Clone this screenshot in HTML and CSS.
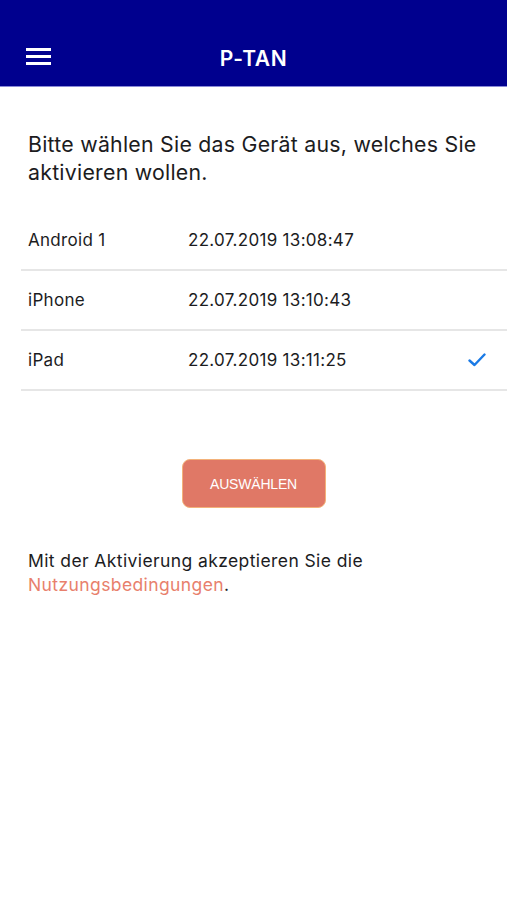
FILE: index.html
```html
<!DOCTYPE html>
<html lang="de">
<head>
<meta charset="utf-8">
<link rel="stylesheet" href="styles.css">
</head>
<body>
<header class="topbar">
  <button class="menu" aria-label="Menü">
    <svg width="25" height="17" viewBox="0 0 25 17"><rect x="0" y="0" width="25" height="3" fill="#fff"/><rect x="0" y="7" width="25" height="3" fill="#fff"/><rect x="0" y="14" width="25" height="3" fill="#fff"/></svg>
  </button>
  <h1 class="title">P-TAN</h1>
</header>
<main class="content">
  <p class="intro">Bitte wählen Sie das Gerät aus, welches Sie aktivieren wollen.</p>
  <ul class="devices">
    <li class="device"><span class="name">Android 1</span><span class="date">22.07.2019 13:08:47</span></li>
    <li class="device"><span class="name">iPhone</span><span class="date">22.07.2019 13:10:43</span></li>
    <li class="device"><span class="name">iPad</span><span class="date">22.07.2019 13:11:25</span>
      <svg class="check" width="18" height="14" viewBox="0 0 18 14"><path d="M1.5 7.5 L6.5 12 L16.5 1.5" fill="none" stroke="#1a7ae6" stroke-width="2.4" stroke-linecap="round" stroke-linejoin="round"/></svg>
    </li>
  </ul>
  <div class="actions"><button class="select">AUSWÄHLEN</button></div>
  <p class="terms">Mit der Aktivierung akzeptieren Sie die <a class="link" href="#">Nutzungsbedingungen</a>.</p>
</main>
</body>
</html>
```
FILE: styles.css
```css
* { box-sizing: border-box; }
html, body { margin: 0; padding: 0; background: #fff; }
body { font-family: Inter, "Noto Sans", sans-serif; color: #1c1c1e; }
.topbar {
  height: 87px;
  background: #00008e;
  display: flex;
  align-items: flex-end;
  justify-content: center;
  padding-bottom: 15px;
  border-bottom: 1px solid #8a8ad8;
  position: relative;
}
.menu {
  position: absolute;
  left: 26px;
  top: 48px;
  background: none;
  border: 0;
  padding: 0;
  line-height: 0;
}
.title {
  margin: 0;
  color: #fff;
  font-size: 21px;
  font-weight: 600;
  letter-spacing: 0.6px;
  line-height: 24px;
}
.content { padding: 43px 0 0 21px; }
.intro {
  margin: 0 0 0 7px;
  font-size: 21.3px;
  letter-spacing: 0.25px;
  line-height: 28px;
  padding-right: 10px;
}
.devices { list-style: none; margin: 25px 0 0; padding: 0; }
.device {
  height: 60px;
  display: flex;
  align-items: center;
  padding-left: 7px;
  border-bottom: 2px solid #e6e6e6;
  font-size: 17px;
  letter-spacing: 0.3px;
}
.name { width: 160px; }
.date { flex: 1; }
.check { margin-right: 21px; }
.actions { display: flex; justify-content: center; padding: 68px 21px 0 0; }
.select {
  width: 144px;
  height: 49px;
  background: #e07866;
  border: 1px solid #f3b27a;
  border-radius: 8px;
  color: #fff;
  font-family: "Liberation Sans", Arial, sans-serif;
  font-size: 14px;
  letter-spacing: -0.2px;
}
.terms {
  margin: 41px 0 0 7px;
  font-size: 17.5px;
  letter-spacing: 0.4px;
  line-height: 24px;
}
.link { color: #e8806c; text-decoration: none; }
```
